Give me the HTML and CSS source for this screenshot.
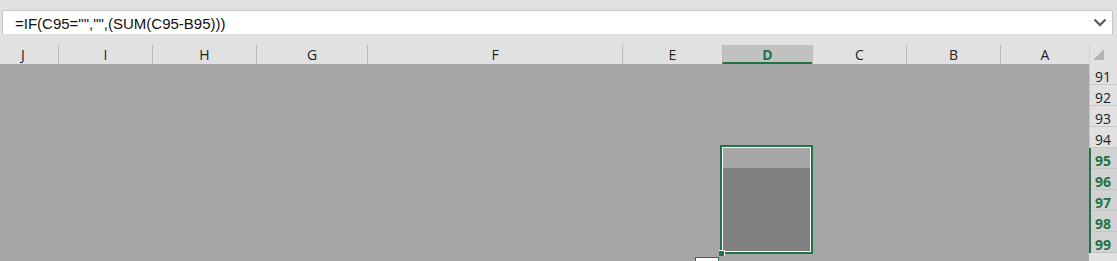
FILE: index.html
```html
<!DOCTYPE html>
<html lang="en">
<head>
  <meta charset="UTF-8" />
  <title>Sheet</title>
  <link rel="stylesheet" href="styles.css">
</head>
<body>
  <div class="formula-bar">
    <div class="formula-box">
      <span class="formula-text">=IF(C95="","",(SUM(C95-B95)))</span>
      <svg class="chevron" width="14" height="9" viewBox="0 0 14 9">
        <path d="M1.5 1.5 L7 7 L12.5 1.5" fill="none" stroke="#606060" stroke-width="2.4" />
      </svg>
    </div>
  </div>

  <div class="sheet">
    <div class="col-head col-j">J</div>
    <div class="col-head">I</div>
    <div class="col-head">H</div>
    <div class="col-head">G</div>
    <div class="col-head">F</div>
    <div class="col-head">E</div>
    <div class="col-head active">D</div>
    <div class="col-head">C</div>
    <div class="col-head">B</div>
    <div class="col-head">A</div>
    <div class="corner"><span class="corner-tri"></span></div>

    <div class="cells"></div>

    <div class="row-head r1">91</div>
    <div class="row-head r2">92</div>
    <div class="row-head r3">93</div>
    <div class="row-head r4">94</div>
    <div class="row-head r5 active">95</div>
    <div class="row-head r6 active">96</div>
    <div class="row-head r7 active">97</div>
    <div class="row-head r8 active">98</div>
    <div class="row-head r9 active">99</div>

    <div class="selection">
      <div class="active-cell"></div>
      <div class="range-fill"></div>
      <span class="fill-handle"></span>
    </div>

    <div class="paste-tag"></div>
  </div>
</body>
</html>
```

FILE: styles.css
```css
body {
  margin: 0;
  background: #e1e1e1;
  font-family: 'Open Sans', 'Noto Sans', sans-serif;
  width: 1117px;
  height: 261px;
  overflow: hidden;
}

.formula-bar {
  padding: 10px 4px 0 2px;
  height: 34px;
  box-sizing: border-box;
}

.formula-box {
  height: 24px;
  background: #fff;
  border: 1px solid #c6c6c6;
  border-bottom: none;
  display: flex;
  align-items: center;
  justify-content: space-between;
  padding: 0 5px 0 12px;
  box-sizing: border-box;
}

.formula-text {
  font-family: 'Liberation Sans', Arial, sans-serif;
  font-size: 15px;
  color: #111;
  padding-top: 1px;
}

.chevron {
  display: block;
}

.sheet {
  margin-top: 10px;
  position: relative;
  display: grid;
  grid-template-columns: 58px 94px 104px 111px 255px 100px 90px 94px 94px 89px 28px;
  grid-template-rows: 20px repeat(9, 21px) 8px;
}

.col-head {
  grid-row: 1;
  border-left: 1px solid #b9b9b9;
  display: flex;
  align-items: center;
  justify-content: center;
  font-size: 14px;
  color: #222;
  box-sizing: border-box;
  margin-top: 1px;
}

.col-head.col-j {
  border-left: none;
  padding-right: 12px;
}

.col-head.active {
  background: #c1c1c1;
  color: #217346;
  font-weight: bold;
  border-bottom: 2px solid #217346;
  padding-top: 2px;
}

.corner {
  grid-row: 1;
  grid-column: 11;
  border-left: 1px solid #cfcfcf;
  position: relative;
}

.corner-tri {
  position: absolute;
  right: 13px;
  bottom: 4px;
  width: 0;
  height: 0;
  border-left: 11px solid transparent;
  border-bottom: 11px solid #b4b4b4;
}

.cells {
  grid-column: 1 / 11;
  grid-row: 2 / 12;
  background: #a6a6a6;
}

.row-head {
  grid-column: 11;
  background: linear-gradient(#c8c8c8, #c8c8c8) bottom / 100% 1px no-repeat, #e1e1e1;
  box-shadow: inset 1px 0 0 #c8c8c8;
  display: flex;
  align-items: center;
  justify-content: center;
  padding-top: 4px;
  font-size: 14px;
  color: #222;
  box-sizing: border-box;
}

.r1 { grid-row: 2; }
.r2 { grid-row: 3; }
.r3 { grid-row: 4; }
.r4 { grid-row: 5; }
.r5 { grid-row: 6; }
.r6 { grid-row: 7; }
.r7 { grid-row: 8; }
.r8 { grid-row: 9; }
.r9 { grid-row: 10; }

.row-head.active {
  background: linear-gradient(#c4c4c4, #c4c4c4) bottom / 100% 1px no-repeat, #d2d2d2;
  color: #217346;
  font-weight: bold;
  box-shadow: inset 2px 0 0 #217346;
}

.selection {
  grid-column: 7;
  grid-row: 6 / 11;
  margin: -3px -1px -1px -2px;
  border: 2px solid #217346;
  position: relative;
  display: flex;
  flex-direction: column;
}

.active-cell {
  height: 20px;
  background: #a6a6a6;
  border: 1px solid #fff;
  border-bottom: none;
}

.range-fill {
  flex: 1;
  background: #808080;
  border: 1px solid #fff;
  border-top: none;
}

.fill-handle {
  position: absolute;
  left: -3px;
  bottom: -4px;
  width: 5px;
  height: 5px;
  background: #217346;
  border-top: 1px solid #fff;
  border-right: 1px solid #fff;
}

.paste-tag {
  position: absolute;
  left: 695px;
  top: 213px;
  width: 22px;
  height: 10px;
  background: #fff;
  border: 1px solid #217346;
}
```
